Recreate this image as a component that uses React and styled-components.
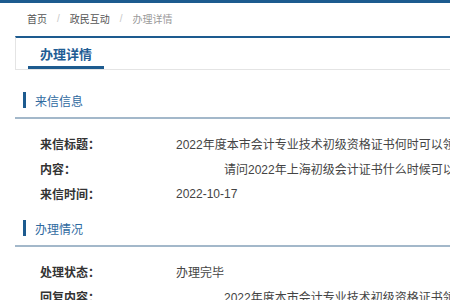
import React from "react";
import styled, { createGlobalStyle } from "styled-components";

const GlobalStyle = createGlobalStyle`
  html, body {
    margin: 0;
    padding: 0;
    background: #fff;
    overflow: hidden;
  }
  body {
    font-family: "Liberation Sans", "Noto Sans CJK SC", sans-serif;
    color: #333;
  }
`;

const letter = [
  { label: "来信标题：", value: "2022年度本市会计专业技术初级资格证书何时可以领取" },
  { label: "内容：", value: "　　　　请问2022年上海初级会计证书什么时候可以领取？" },
  { label: "来信时间：", value: "2022-10-17" },
];

const handling = [
  { label: "处理状态：", value: "办理完毕" },
  { label: "回复内容：", value: "　　　　2022年度本市会计专业技术初级资格证书领取" },
];

function App() {
  return (
    <Page>
      <GlobalStyle />
      <TopBar />
      <Breadcrumb>
        <Crumb>首页</Crumb>
        <Sep>/</Sep>
        <Crumb>政民互动</Crumb>
        <Sep>/</Sep>
        <Crumb current>办理详情</Crumb>
      </Breadcrumb>
      <TabPanel>
        <Tab>办理详情</Tab>
      </TabPanel>

      <Section>
        <SectionHead>
          <Bar />
          来信信息
        </SectionHead>
        <Rows>
          {letter.map((r) => (
            <Row key={r.label}>
              <Label>{r.label}</Label>
              <Value>{r.value}</Value>
            </Row>
          ))}
        </Rows>
      </Section>

      <Section>
        <SectionHead>
          <Bar />
          办理情况
        </SectionHead>
        <Rows>
          {handling.map((r) => (
            <Row key={r.label}>
              <Label>{r.label}</Label>
              <Value>{r.value}</Value>
            </Row>
          ))}
        </Rows>
      </Section>
    </Page>
  );
}

export default App;

const Page = styled.div`
  width: 1100px;
`;

const TopBar = styled.div`
  height: 3px;
  background: #1d5b8f;
`;

const Breadcrumb = styled.div`
  height: 30px;
  display: flex;
  align-items: center;
  padding-left: 27px;
  font-size: 10px;
`;

const Crumb = styled.span`
  color: ${(p) => (p.current ? "#9a9a9a" : "#555")};
`;

const Sep = styled.span`
  color: #c8c8c8;
  padding: 0 10px;
`;

const TabPanel = styled.div`
  margin: 3px 0 13px 15px;
  height: 31px;
  display: flex;
  border-top: 2px solid #1d5b8f;
  border-left: 1px solid #e4e4e4;
  border-bottom: 1px solid #e4e4e4;
`;

const Tab = styled.div`
  margin-left: 12px;
  padding: 3px 12px 0;
  height: 31px;
  box-sizing: border-box;
  display: flex;
  align-items: center;
  font-size: 13px;
  font-weight: bold;
  color: #1f5d94;
  border-bottom: 3px solid #1d5b8f;
  margin-bottom: -1px;
`;

const Section = styled.div`
  margin-left: 15px;
`;

const SectionHead = styled.div`
  margin-top: 3px;
  height: 36px;
  box-sizing: border-box;
  display: flex;
  align-items: center;
  gap: 9px;
  padding-left: 8px;
  font-size: 12px;
  color: #2f6a9f;
  border-bottom: 2px solid #a3b8ca;
`;

const Bar = styled.span`
  width: 3px;
  height: 16px;
  background: #1d5b8f;
`;

const Rows = styled.div`
  padding: 12px 0 2px 25px;
`;

const Row = styled.div`
  display: grid;
  grid-template-columns: 136px auto;
  align-items: center;
  height: 25px;
`;

const Label = styled.span`
  font-size: 12px;
  font-weight: bold;
  color: #333;
`;

const Value = styled.span`
  font-size: 12px;
  color: #444;
  white-space: nowrap;
`;
